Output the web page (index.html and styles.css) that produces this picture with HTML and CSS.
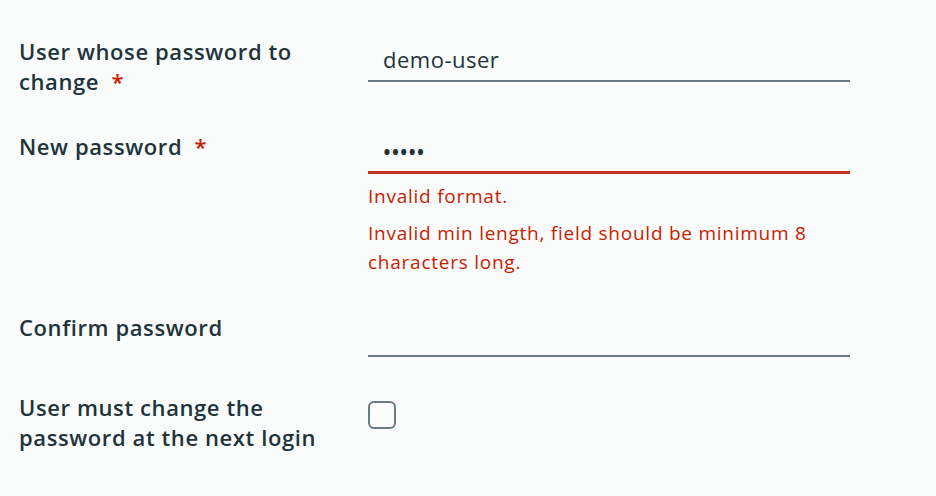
FILE: index.html
```html
<!DOCTYPE html>
<html>
<head>
<meta charset="utf-8">
<link rel="stylesheet" href="styles.css">
</head>
<body>
<form class="form">
  <div class="row row-user">
    <label class="label">User whose password to change <span class="req">*</span></label>
    <div class="control">
      <div class="input input-user">demo-user</div>
    </div>
  </div>
  <div class="row row-new">
    <label class="label">New password <span class="req">*</span></label>
    <div class="control">
      <div class="input input-error"><span class="dots">•••••</span></div>
      <div class="error e1">Invalid format.</div>
      <div class="error e2">Invalid min length, field should be minimum 8 characters long.</div>
    </div>
  </div>
  <div class="row row-confirm">
    <label class="label">Confirm password</label>
    <div class="control">
      <div class="input input-confirm"></div>
    </div>
  </div>
  <div class="row row-check">
    <label class="label">User must change the password at the next login</label>
    <div class="control">
      <span class="checkbox"></span>
    </div>
  </div>
</form>
</body>
</html>
```
FILE: styles.css
```css
html, body {
  margin: 0;
  padding: 0;
  background: #fafbfb;
}
body {
  width: 936px;
  height: 496px;
  overflow: hidden;
  font-family: "Open Sans", "Noto Sans", sans-serif;
  color: #21333b;
}
.form {
  padding: 36px 0 0 19px;
}
.row {
  display: grid;
  grid-template-columns: 349px 482px;
}
.label {
  font-size: 22px;
  font-weight: 600;
  line-height: 30px;
  letter-spacing: 0.6px;
  width: 310px;
}
.req {
  color: #c92100;
  margin-left: 6px;
  line-height: 1;
}
.input {
  height: 36px;
  border-bottom: 2px solid #6b7980;
  box-sizing: content-box;
  font-size: 22px;
  letter-spacing: 0.5px;
  line-height: 36px;
  padding-left: 15px;
  margin-top: 2px;
}
.input-user {
  margin-top: 5px;
  height: 39px;
}
.input-error {
  border-bottom: 3px solid #c5321e;
  margin-top: 4px;
  line-height: 32px;
}
.input-confirm {
  margin-top: 7px;
}
.dots {
  font-size: 21px;
  font-weight: 600;
  letter-spacing: 0.5px;
}
.error {
  color: #c92100;
  font-size: 19px;
  letter-spacing: 0.75px;
  line-height: 29px;
}
.e1 { margin-top: 8px; }
.e2 { margin-top: 8px; }
.row-new { margin-top: 35px; }
.row-confirm { margin-top: 35px; }
.row-check { margin-top: 35px; }
.checkbox {
  display: block;
  width: 24px;
  height: 24px;
  border: 2px solid #6b7980;
  border-radius: 6px;
  margin-top: 9px;
}
```
